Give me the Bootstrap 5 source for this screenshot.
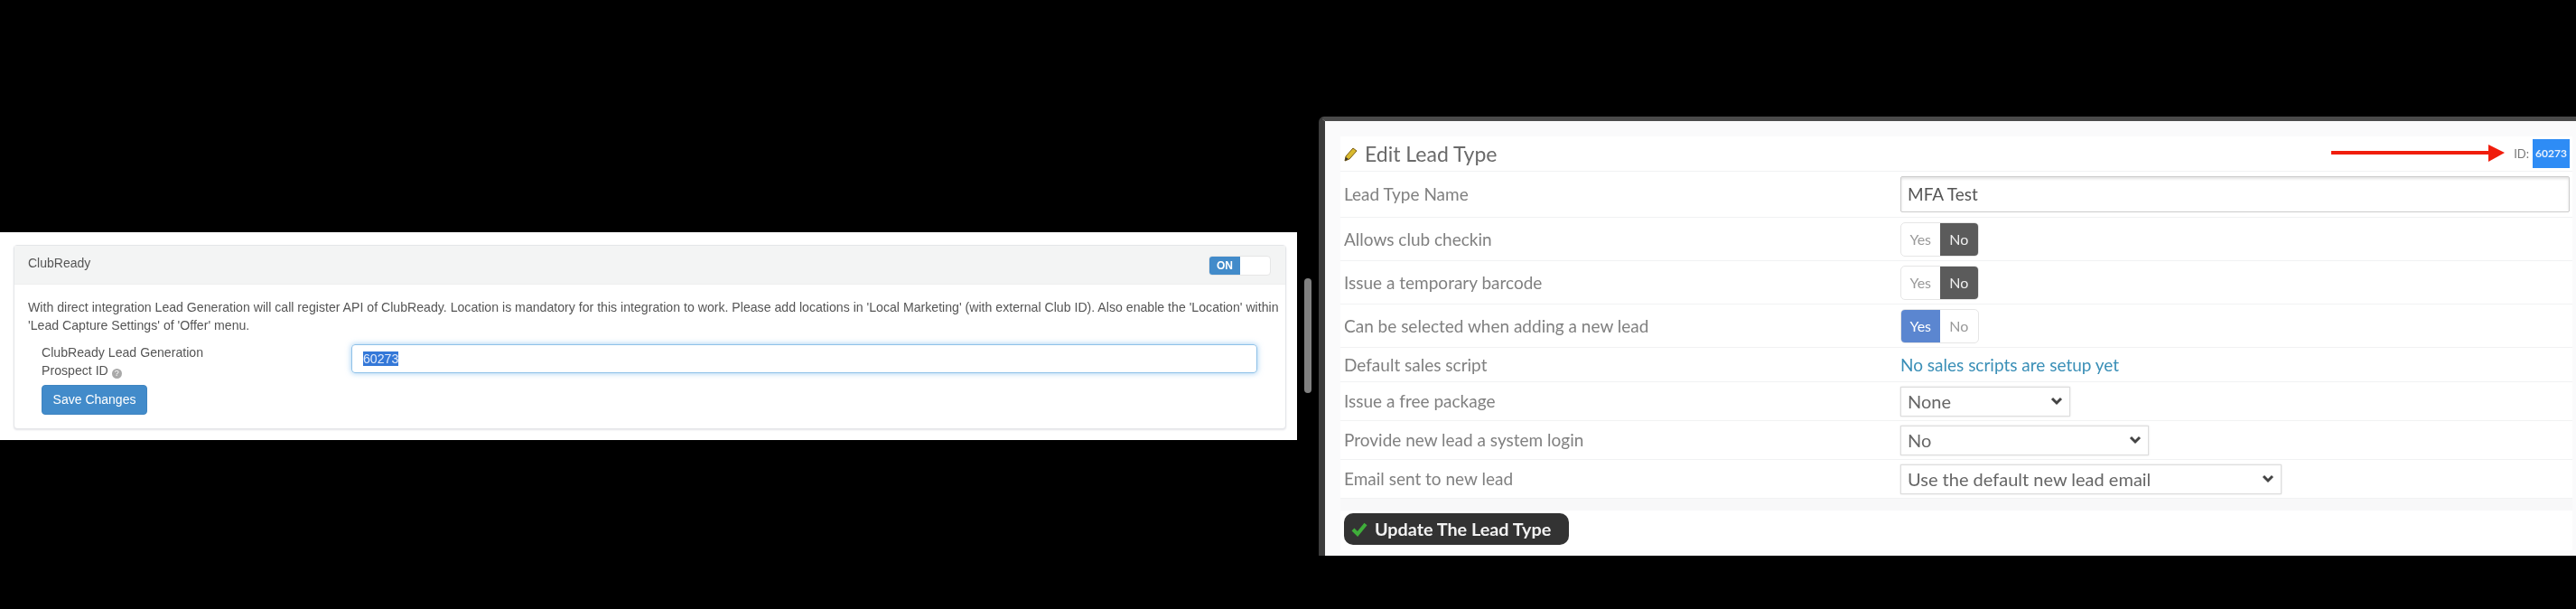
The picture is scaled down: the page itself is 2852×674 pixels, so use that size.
<!DOCTYPE html>
<html lang="en">

<head>
  <meta charset="UTF-8" />
  <meta name="viewport" content="width=device-width, initial-scale=1" />
  <title>Lead Type ID</title>
  <link href="https://cdn.jsdelivr.net/npm/bootstrap@5.3.0/dist/css/bootstrap.min.css" rel="stylesheet">
  <style>
    html, body { background: #000; height: 100%; overflow: hidden; }
    .stage { width: 2852px; height: 674px; }

    /* left window */
    .crm-pane { width: 1436px; height: 230px; margin-top: 257px; padding: 14px 12px 12px 15px; background: #fff; font: 14.13px/20px "Liberation Sans", Arial, sans-serif; color: #555; filter: blur(.5px); }
    .crm-card { height: 204px; border-color: #e4e6e9; border-radius: 4px; box-shadow: 0 1px 2px #e4e4e8; }
    .crm-head { height: 45px; padding: 0 15px; background: #f3f4f4; border-bottom: 1px solid #eee; }
    .crm-title { font-size: 14px; margin-top: -4px; }
    .onoff { width: 69px; height: 22px; border: 1px solid #e6e6e6; border-radius: 4px; background: #fff; margin-right: 1px; margin-top: 1px; overflow: hidden; }
    .onoff-on { width: 34px; background: #428bca; color: #fff; font-size: 12px; font-weight: 700; line-height: 20px; text-align: center; }
    .crm-body { padding: 15px 4px 15px 15px; }
    .crm-row { display: grid; grid-template-columns: 358px 1003px; margin-top: 10px; }
    .crm-label { padding-left: 15px; }
    .crm-input { height: 32px; margin-top: 1px; padding: 5px 12px; border: 1px solid #8fc1e8; border-radius: 4px; box-shadow: 0 0 6px rgba(102, 175, 233, .65); line-height: 21px; }
    .sel-text { background: #3478d8; color: #dfe9fb; }
    .help-dot { display: inline-block; width: 11px; height: 11px; border-radius: 50%; background: #a9a9a9; color: #fff; font-size: 9px; line-height: 11px; text-align: center; vertical-align: -1px; }
    .crm-save { display: block; width: 117px; height: 33px; margin: 6px 0 0 15px; padding: 0; background: #428bca; border: 1px solid #3f85c1; border-radius: 4px; color: #fff; font-size: 14px; }

    /* scrollbar between the two windows */
    .gutter { width: 24px; height: 674px; padding: 308px 0 0 8px; }
    .gutter-thumb { width: 8px; height: 127px; border-radius: 4px; background: #808080; }

    /* right window */
    .edit-pane { width: 1392px; height: 486px; margin-top: 129px; border-top: 5px solid #4a4a4a; border-left: 7px solid #3c3c3c; border-top-left-radius: 6px; padding: 17px 4px 0 17px; background: #fafafb; font: 19px/24px Lato, "Open Sans", sans-serif; color: #808080; filter: blur(.7px); }
    .edit-table { background: #fff; }
    .edit-row { display: grid; grid-template-columns: 616px 1fr; align-items: center; border-bottom: 1px solid #f1f2f3; padding-left: 4px; }
    .edit-title { height: 39px; grid-template-columns: 1fr auto; padding-right: 3px; }
    .edit-heading { font-size: 23px; line-height: 30px; color: #6a6a6a; }
    .edit-id { color: #777; font-size: 13px; }
    .id-sel { display: inline-block; width: 41px; height: 32px; margin-left: 4px; background: #2e8cf5; color: #e6f0fe; font-size: 12px; font-weight: 700; line-height: 32px; text-align: center; overflow: hidden; }
    .h-51 { height: 51px; }
    .h-48 { height: 48px; }
    .h-38 { height: 38px; }
    .h-43 { height: 43px; }
    .name-input { height: 40px; margin-right: 3px; padding: 0 7px; border: 1px solid #ccc; box-shadow: inset 0 2px 3px #e2e2e2; border-radius: 2px; color: #555; line-height: 38px; }
    .yn { display: inline-flex; width: 87px; height: 38px; border: 1px solid #e6e6e6; border-radius: 5px; overflow: hidden; font-size: 16px; line-height: 36px; text-align: center; color: #999; }
    .yn span { width: 50%; }
    .yn .yn-no { background: #5b5b5b; color: #eee; }
    .yn .yn-yes { background: #5b86d0; color: #fff; }
    .script-link { color: #3a8fb7; text-decoration: none; }
    .plain-select { height: 33px; padding: 0 24px 0 7px; border: 1px solid #ddd; border-radius: 0; box-shadow: 0 0 2px #ddd; font: 20px Lato, "Open Sans", sans-serif; color: #666; background-size: 14px 10px; background-position: right 7px center; background-image: url("data:image/svg+xml,%3csvg xmlns='http://www.w3.org/2000/svg' viewBox='0 0 14 10'%3e%3cpath fill='none' stroke='%23444' stroke-width='3' d='M2 2l5 5 5-5'/%3e%3c/svg%3e"); }
    .w-188 { width: 188px; }
    .w-275 { width: 275px; }
    .w-422 { width: 422px; }
    .edit-band { height: 13px; background: #f8f8f9; }
    .edit-foot { height: 44px; background: #fff; padding: 3px 0 0 4px; }
    .update-btn { width: 249px; height: 35px; padding: 0 0 0 8px; background: #333; border: 0; border-radius: 10px; color: #f2f2f2; font-size: 19.8px; font-weight: 700; line-height: 35px; }
  </style>
</head>

<body>
  <div class="stage d-flex align-items-start">

    <!-- Panel esquerdo -->
    <div class="crm-pane">
      <div class="card crm-card">
        <div class="crm-head d-flex justify-content-between align-items-center">
          <span class="crm-title">ClubReady</span>
          <div class="onoff d-flex">
            <div class="onoff-on">ON</div>
          </div>
        </div>
        <div class="crm-body">
          <div>With direct integration Lead Generation will call register API of ClubReady. Location is mandatory for this integration to work. Please add locations in 'Local Marketing' (with external Club ID). Also enable the 'Location' within 'Lead Capture Settings' of 'Offer' menu.</div>
          <div class="crm-row">
            <div class="crm-label">ClubReady Lead Generation<br>Prospect ID <span class="help-dot">?</span></div>
            <div class="crm-input"><span class="sel-text">60273</span></div>
          </div>
          <button type="button" class="btn crm-save">Save Changes</button>
        </div>
      </div>
    </div>

    <div class="gutter">
      <div class="gutter-thumb"></div>
    </div>

    <!-- Panel direito -->
    <div class="edit-pane">
      <div class="edit-table">
        <div class="edit-row edit-title">
          <div class="d-flex align-items-center gap-2">
            <svg width="15" height="17" viewBox="0 0 15 17">
              <path d="M1 16l1-5L10 2l4 3-8 9z" fill="#d8b92e" stroke="#7a5a10" stroke-width="1" />
              <path d="M1 16l1-4 3 2z" fill="#333" />
            </svg>
            <span class="edit-heading">Edit Lead Type</span>
          </div>
          <div class="d-flex align-items-center">
            <svg width="194" height="20" viewBox="0 0 194 20" class="me-2">
              <path d="M0 7h174V0l18 9-18 10v-8H0z" fill="#f01d0c" />
            </svg>
            <span class="edit-id">ID:</span><span class="id-sel">60273</span>
          </div>
        </div>

        <div class="edit-row h-51">
          <div>Lead Type Name</div>
          <div class="name-input">MFA Test</div>
        </div>
        <div class="edit-row h-48">
          <div>Allows club checkin</div>
          <div><div class="yn"><span>Yes</span><span class="yn-no">No</span></div></div>
        </div>
        <div class="edit-row h-48">
          <div>Issue a temporary barcode</div>
          <div><div class="yn"><span>Yes</span><span class="yn-no">No</span></div></div>
        </div>
        <div class="edit-row h-48">
          <div>Can be selected when adding a new lead</div>
          <div><div class="yn"><span class="yn-yes">Yes</span><span>No</span></div></div>
        </div>
        <div class="edit-row h-38">
          <div>Default sales script</div>
          <div><a class="script-link" href="#">No sales scripts are setup yet</a></div>
        </div>
        <div class="edit-row h-43">
          <div>Issue a free package</div>
          <div><select class="form-select plain-select w-188"><option>None</option></select></div>
        </div>
        <div class="edit-row h-43">
          <div>Provide new lead a system login</div>
          <div><select class="form-select plain-select w-275"><option>No</option></select></div>
        </div>
        <div class="edit-row h-43">
          <div>Email sent to new lead</div>
          <div><select class="form-select plain-select w-422"><option>Use the default new lead email</option></select></div>
        </div>
      </div>
      <div class="edit-band"></div>
      <div class="edit-foot">
        <button type="button" class="btn update-btn d-flex align-items-center gap-2">
          <svg width="18" height="16" viewBox="0 0 18 16">
            <path d="M2 8l5 5 9-11" fill="none" stroke="#3fae3a" stroke-width="4" />
          </svg>
          Update The Lead Type
        </button>
      </div>
    </div>
  </div>

  <script src="https://cdn.jsdelivr.net/npm/bootstrap@5.3.0/dist/js/bootstrap.bundle.min.js"></script>
</body>

</html>
